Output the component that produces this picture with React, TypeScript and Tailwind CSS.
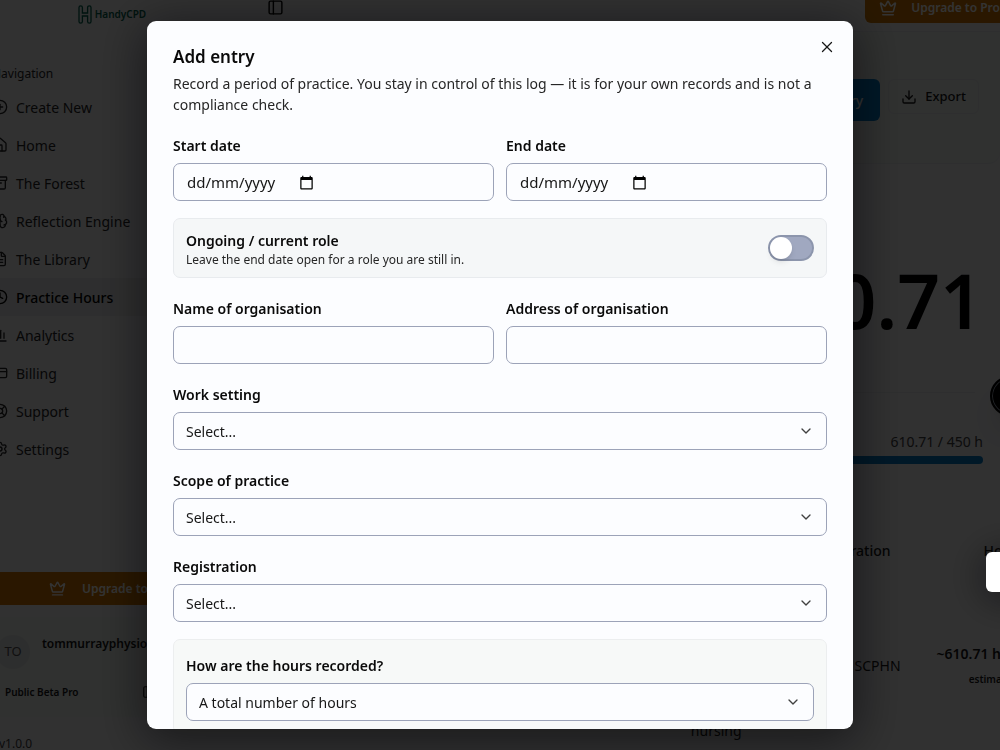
import type { ReactNode } from 'react';
import {
  Archive,
  Brain,
  ChartColumn,
  ChevronDown,
  CirclePlus,
  Clock,
  CreditCard,
  Crown,
  Download,
  FileText,
  House,
  LifeBuoy,
  PanelLeft,
  Settings,
  X,
} from 'lucide-react';

const navItems = [
  { icon: CirclePlus, label: 'Create New' },
  { icon: House, label: 'Home' },
  { icon: Archive, label: 'The Forest' },
  { icon: Brain, label: 'Reflection Engine' },
  { icon: FileText, label: 'The Library' },
  { icon: Clock, label: 'Practice Hours', active: true },
  { icon: ChartColumn, label: 'Analytics' },
  { icon: CreditCard, label: 'Billing' },
  { icon: LifeBuoy, label: 'Support' },
  { icon: Settings, label: 'Settings' },
];

function Logo() {
  return (
    <div className="flex items-center gap-[3px] text-[#00604a]">
      <svg width="14" height="19" viewBox="0 0 14 19" fill="none" stroke="currentColor" strokeWidth="1.3">
        <path d="M1 2.500a1.500 1.500 0 0 1 3.400 0V8h5.200V2.500a1.500 1.500 0 0 1 3.400 0v14a1.500 1.500 0 0 1-3.400 0V11H4.400v5.500a1.500 1.500 0 0 1-3.400 0z" />
      </svg>
      <span className="text-[10px] font-semibold">HandyCPD</span>
    </div>
  );
}

function Sidebar() {
  return (
    <aside className="-ml-4 flex w-[248px] shrink-0 flex-col">
      <div className="flex h-7 items-center justify-center pl-2">
        <Logo />
      </div>
      <p className="mt-9 pl-2 text-[12px] leading-5 text-neutral-800">Navigation</p>
      <nav className="mt-1 flex flex-col">
        {navItems.map(({ icon: Icon, label, active }) => (
          <a
            key={label}
            href="#"
            className={`flex h-[38px] items-center gap-2 pl-2 text-[14px] ${
              active ? 'bg-[#e6e6e8] font-medium text-black' : 'text-neutral-800'
            }`}
          >
            <Icon size={16} />
            {label}
          </a>
        ))}
      </nav>
      <div className="mt-auto flex flex-col">
        <button className="flex h-[33px] items-center justify-center gap-4 bg-[#d07600] pl-1 text-[12px] font-semibold text-white">
          <Crown size={17} />
          Upgrade to Pro
        </button>
        <div className="mt-3 flex h-[100px] flex-col justify-center gap-4 bg-[#eef2ef] pl-3">
          <div className="flex gap-3">
            <span className="flex size-[34px] items-center justify-center rounded-full bg-[#e2e5e3] text-[13px] text-neutral-600">TO</span>
            <span className="text-[12px] font-semibold text-neutral-900">tommurrayphysio</span>
          </div>
          <div className="flex items-center gap-[64px] pl-[9px] text-[10px] font-semibold text-neutral-900">
            Public Beta Pro
            <PanelLeft size={14} />
          </div>
        </div>
        <p className="mt-[17px] -mb-1 pl-[15px] text-[12px] leading-5 text-neutral-700">v1.0.0</p>
      </div>
    </aside>
  );
}

function PracticeHours() {
  return (
    <main className="-mr-9 flex min-w-0 flex-1 flex-col">
      <header className="-mt-4 flex h-12 shrink-0 items-center justify-between border-b border-gray-200 pr-[22px] pl-[35px]">
        <PanelLeft size={17} />
        <button className="flex h-[31px] items-center gap-[14px] rounded-md bg-[#d07600] px-[14px] text-[12px] font-semibold text-white">
          <Crown size={18} />
          Upgrade to Pro
        </button>
      </header>
      <section className="mr-9 flex h-[132px] shrink-0 items-start justify-end gap-2 rounded-br-xl border-b border-gray-200 bg-[#eef2ef] pt-[47px] pr-[21px]">
        <button className="h-[42px] rounded-md bg-[#0078c4] px-[17px] text-[14px] font-medium text-white">Add entry</button>
        <button className="flex h-[35px] items-center gap-2 rounded-md border border-gray-200 px-3 text-[13px] font-medium text-neutral-900">
          <Download size={16} />
          Export
        </button>
      </section>
      <section className="mr-[53px] ml-8 flex flex-col">
        <p className="mt-[86px] text-right text-[75px] leading-[100px] font-semibold text-black">610.71</p>
        <hr className="mt-[42px] mr-2 border-gray-200" />
        <p className="mt-[39px] text-right text-[14px] leading-5 text-neutral-700">610.71 / 450 h</p>
        <div className="mt-1 h-2 rounded-full bg-[#0078c4]" />
      </section>
      <table className="mt-[64px] mr-2 ml-8 table-fixed text-[14px] text-neutral-900">
        <thead>
          <tr className="h-11 text-left">
            <th className="font-medium">Scope</th>
            <th className="w-[180px] pr-[46px] text-right font-medium">Registration</th>
            <th className="w-[88px] pr-1 text-right font-medium">Hours</th>
          </tr>
        </thead>
        <tbody>
          <tr className="h-[186px]">
            <td className="pr-[15px] text-right">
              <span className="inline-block pt-[130px]">nursing</span>
            </td>
            <td className="pr-9 text-right">SCPHN</td>
            <td className="text-right font-semibold whitespace-nowrap">
              <span className="flex flex-col items-end gap-2 pr-[14px]">
                ~610.71 hrs
                <span className="-mr-1 text-[10px]">estimated</span>
              </span>
            </td>
          </tr>
        </tbody>
      </table>
    </main>
  );
}

const control =
  'h-[38px] w-full rounded-[7px] border border-[#9ca3b8] bg-[#fcfdff] text-[14px] text-neutral-900 outline-none';

function Field({ id, label, children }: { id: string; label: string; children: ReactNode }) {
  return (
    <div className="flex min-w-0 flex-1 flex-col">
      <label htmlFor={id} className="mb-[3px] text-[14px] leading-7 font-semibold">
        {label}
      </label>
      {children}
    </div>
  );
}

function DateField({ id, label }: { id: string; label: string }) {
  return (
    <Field id={id} label={label}>
      <div className={`${control} flex items-center pl-[13px]`}>
        <input
          id={id}
          type="text"
          placeholder="dd/mm/yyyy"
          className="w-[112px] bg-transparent text-[15px] outline-none placeholder:text-neutral-900"
        />
        <button type="button" aria-label={`Pick ${label.toLowerCase()}`} className="text-black">
          <svg width="15" height="15" viewBox="0 0 24 24" fill="currentColor">
            <path d="M20 3h-1V1h-2v2H7V1H5v2H4c-1.100 0-2 .9-2 2v16c0 1.100.9 2 2 2h16c1.100 0 2-.9 2-2V5c0-1.100-.9-2-2-2zm0 18H4V8h16v13z" />
          </svg>
        </button>
      </div>
    </Field>
  );
}

function SelectField({ id, label, option }: { id: string; label: string; option: string }) {
  return (
    <Field id={id} label={label}>
      <div className="relative">
        <select id={id} className={`${control} appearance-none px-3`}>
          <option>{option}</option>
        </select>
        <ChevronDown size={16} className="pointer-events-none absolute top-[11px] right-[13px] text-neutral-700" />
      </div>
    </Field>
  );
}

function AddEntryDialog() {
  return (
    <div
      role="dialog"
      aria-modal="true"
      aria-labelledby="dialog-title"
      className="relative flex max-h-full w-full max-w-[706px] flex-col overflow-hidden rounded-[9px] bg-[#fcfdff] text-neutral-950 shadow-[0_8px_48px_4px_rgba(0,0,0,0.5)]"
    >
      <button type="button" aria-label="Close" className="absolute top-[17px] right-[17px] text-neutral-900">
        <X size={18} strokeWidth={1.7} />
      </button>
      <form className="flex flex-col gap-[17px] overflow-y-auto p-[26px] [scrollbar-width:none]">
        <div>
          <h2 id="dialog-title" className="text-[17px] leading-5 font-semibold">Add entry</h2>
          <p className="mt-[6px] text-[14px] leading-[21px] text-neutral-800">
            Record a period of practice. You stay in control of this log — it is for your own records and is not a compliance check.
          </p>
        </div>
        <div className="flex gap-3">
          <DateField id="start" label="Start date" />
          <DateField id="end" label="End date" />
        </div>
        <div className="flex h-[60px] shrink-0 items-center justify-between rounded-[7px] border border-[#e8ebee] bg-[#f5f7f8] px-3">
          <label htmlFor="ongoing" className="flex flex-col pt-1">
            <span className="text-[14px] leading-5 font-semibold">Ongoing / current role</span>
            <span className="text-[12px] leading-[18px] text-neutral-800">Leave the end date open for a role you are still in.</span>
          </label>
          <input
            id="ongoing"
            type="checkbox"
            role="switch"
            className="flex h-[26px] w-[46px] appearance-none items-center rounded-full border-2 border-[#8c95ac] bg-[#a0a8c0] before:size-[22px] before:rounded-full before:bg-white before:shadow-md before:content-[''] checked:justify-end"
          />
        </div>
        <div className="flex gap-3">
          <Field id="name" label="Name of organisation">
            <input id="name" type="text" className={`${control} px-3`} />
          </Field>
          <Field id="address" label="Address of organisation">
            <input id="address" type="text" className={`${control} px-3`} />
          </Field>
        </div>
        <SelectField id="setting" label="Work setting" option="Select..." />
        <SelectField id="scope" label="Scope of practice" option="Select..." />
        <SelectField id="registration" label="Registration" option="Select..." />
        <div className="rounded-[7px] border border-[#eceeef] bg-[#f7f9f8] p-3">
          <SelectField id="hours" label="How are the hours recorded?" option="A total number of hours" />
        </div>
      </form>
    </div>
  );
}

export default function App() {
  return (
    <div className="relative h-screen overflow-hidden bg-[#f2f2f5] font-['Noto_Sans','Open_Sans',sans-serif]">
      <div className="flex h-full overflow-hidden">
        <Sidebar />
        <PracticeHours />
      </div>
      <button
        aria-label="Open chat"
        className="absolute top-[376px] -right-[30px] size-10 rounded-full border-2 border-black bg-black shadow-xl ring-1 ring-gray-400 ring-inset"
      />
      <div className="fixed inset-0 flex items-center justify-center bg-black/80 py-[21px]">
        <AddEntryDialog />
      </div>
      <div className="fixed top-[552px] -right-10 h-10 w-[54px] rounded-md bg-white shadow-[0_4px_40px_rgba(0,0,0,0.6)]" />
    </div>
  );
}
